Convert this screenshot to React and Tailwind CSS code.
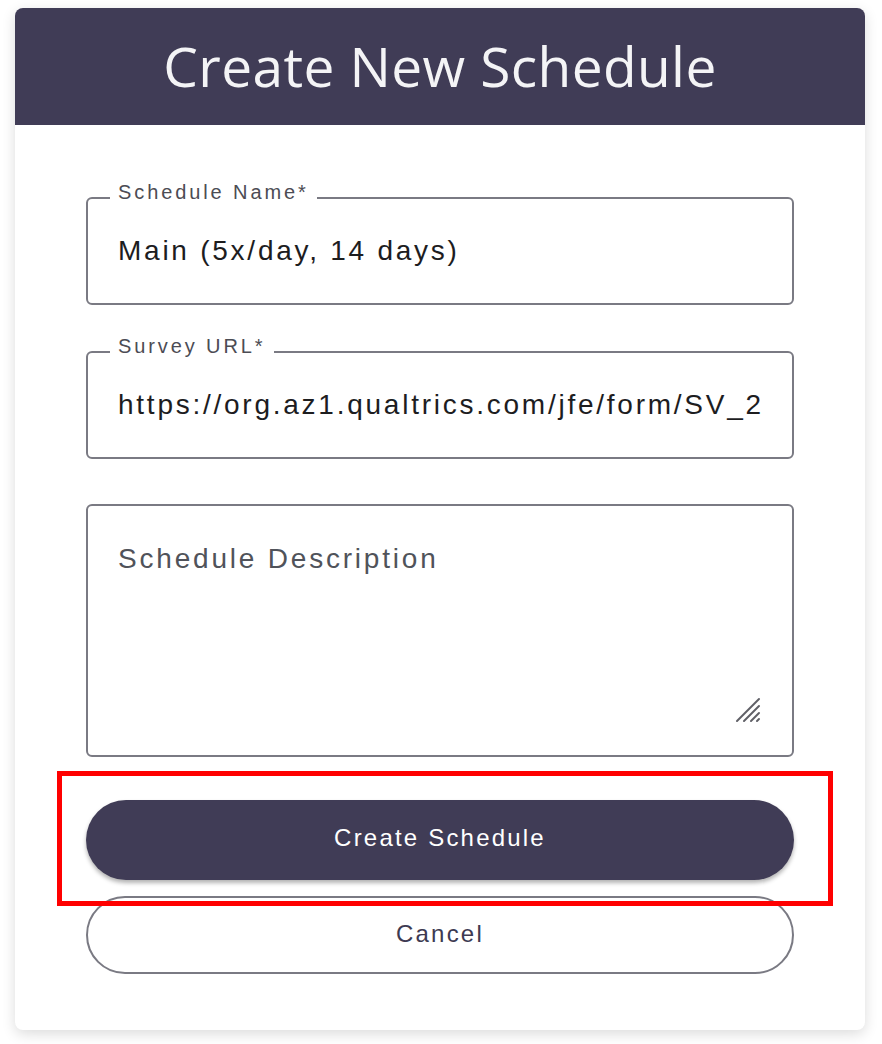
import React from 'react';

const fieldText = { fontFamily: '"Liberation Sans", Arial, sans-serif' };

const OutlinedField = ({ label, value }) => {
  return (
    <div className="relative h-[108px] border-2 border-[#7a7a83] rounded-[6px] flex items-center px-[30px]">
      <span
        className="absolute left-[22px] top-[-7px] -translate-y-1/2 bg-white px-[8px] text-[20px] leading-none text-[#4c4c54] tracking-[2.9px]"
        style={fieldText}
      >
        {label}
      </span>
      <input
        type="text"
        readOnly
        value={value}
        className="w-full bg-transparent text-[28px] text-[#1d1d1f] tracking-[2.75px] outline-none"
        style={fieldText}
      />
    </div>
  );
};

const ResizeGrip = () => (
  <svg className="absolute right-[31px] bottom-[32px]" width="26" height="26" viewBox="0 0 26 26">
    <g stroke="#5f5f66" strokeWidth="2" strokeLinecap="round">
      <line x1="2" y1="24" x2="24" y2="2" />
      <line x1="9" y1="24" x2="24" y2="9" />
      <line x1="16" y1="24" x2="24" y2="16" />
      <line x1="22" y1="24" x2="24" y2="22" />
    </g>
  </svg>
);

export default function App() {
  return (
    <div className="w-[882px] h-[1044px] bg-white pt-[8px] pl-[15px]">
      <div className="w-[850px] h-[1022px] bg-white rounded-[8px] shadow-[0_4px_14px_rgba(0,0,0,0.14)] flex flex-col">
        <header className="h-[117px] bg-[#403c56] rounded-t-[8px] flex items-center justify-center">
          <h1
            className="text-[55px] text-[#f4f4f6] tracking-[0.4px] leading-none -mt-[2px]"
            style={{ fontFamily: '"Open Sans", "Noto Sans", sans-serif' }}
          >
            Create New Schedule
          </h1>
        </header>

        <div className="flex flex-col px-[71px] pt-[72px]">
          <OutlinedField label="Schedule Name*" value="Main (5x/day, 14 days)" />
          <div className="h-[46px]" />
          <OutlinedField label="Survey URL*" value="https://org.az1.qualtrics.com/jfe/form/SV_2" />

          <div className="relative mt-[45px] h-[253px] border-2 border-[#7a7a83] rounded-[6px]">
            <textarea
              placeholder="Schedule Description"
              className="w-full h-full resize-none bg-transparent px-[30px] pt-[36px] text-[28px] leading-[34px] tracking-[2.8px] text-[#1d1d1f] placeholder:text-[#50535a] outline-none"
              style={fieldText}
            />
            <ResizeGrip />
          </div>

          <div className="relative mt-[43px]">
            <button
              className="w-full h-[80px] pb-[4px] rounded-full bg-[#403c56] text-white text-[24px] tracking-[2.2px] shadow-[0_3px_4px_rgba(0,0,0,0.3)]"
              style={fieldText}
            >
              Create Schedule
            </button>
            <div className="absolute left-[-29px] top-[-29px] w-[776px] h-[135px] border-[5px] border-[#ff0000] z-10 pointer-events-none" />
          </div>

          <button
            className="mt-[16px] w-full h-[78px] pb-[3px] rounded-full border-2 border-[#7a7a83] bg-white text-[#3d3a52] text-[24px] tracking-[2.2px]"
            style={fieldText}
          >
            Cancel
          </button>
        </div>
      </div>
    </div>
  );
}
